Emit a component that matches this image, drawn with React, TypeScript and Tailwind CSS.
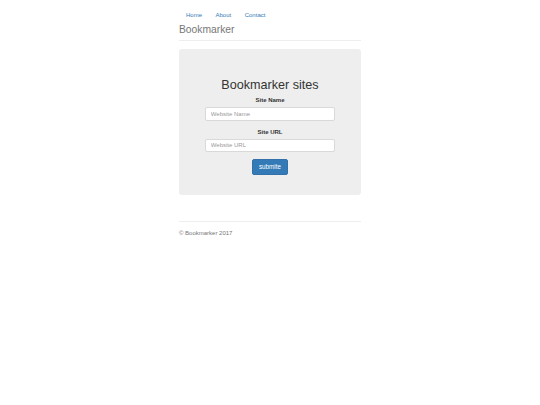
export default function App() {
  return (
    <div className="min-h-screen bg-white font-['Liberation_Sans',Arial,sans-serif] text-[#333]">
      <div className="mx-auto w-[182px]">
        {/* header */}
        <div className="pb-[3.5px] border-b border-[#eee]">
          <nav className="h-[24px] pt-[10.5px]">
            <ul className="flex gap-[13.5px] pl-[7px] text-[6px] leading-[8px] text-[#337ab7]">
              <li><a href="#">Home</a></li>
              <li><a href="#">About</a></li>
              <li><a href="#">Contact</a></li>
            </ul>
          </nav>
          <h3 className="text-[10.3px] leading-[12px] text-[#777]">Bookmarker</h3>
        </div>

        {/* jumbotron */}
        <div className="mt-[8px] rounded-[3px] bg-[#eee] pt-[29.5px] pb-[20px] flex flex-col items-center">
          <h1 className="text-[12.6px] leading-[14px] text-[#333]">Bookmarker sites</h1>
          <form className="mt-[4px] flex flex-col items-center" onSubmit={e => e.preventDefault()}>
            <div className="mb-[7px] flex flex-col items-center">
              <label className="mb-[3px] text-[6px] leading-[8px] font-bold">Site Name</label>
              <input
                type="text"
                placeholder="Website Name"
                className="h-[13.5px] w-[130.5px] rounded-[2px] border border-[#d9d9d9] bg-white px-[5px] text-[6px] text-[#555] placeholder:text-[#999] outline-none"
              />
            </div>
            <div className="flex flex-col items-center">
              <label className="mb-[3px] text-[6px] leading-[8px] font-bold">Site URL</label>
              <input
                type="text"
                placeholder="Website URL"
                className="h-[13.5px] w-[130.5px] rounded-[2px] border border-[#d9d9d9] bg-white px-[5px] text-[6px] text-[#555] placeholder:text-[#999] outline-none"
              />
            </div>
            <button
              type="submit"
              className="mt-[7px] h-[16px] w-[35.5px] rounded-[2px] border border-[#3271aa] bg-[#337ab7] text-[6.3px] leading-[8px] text-white"
            >
              submite
            </button>
          </form>
        </div>

        {/* footer */}
        <footer className="mt-[26px] border-t border-[#eee] pt-[6.5px]">
          <p className="text-[6px] leading-[8px] text-[#777]">© Bookmarker 2017</p>
        </footer>
      </div>
    </div>
  )
}
